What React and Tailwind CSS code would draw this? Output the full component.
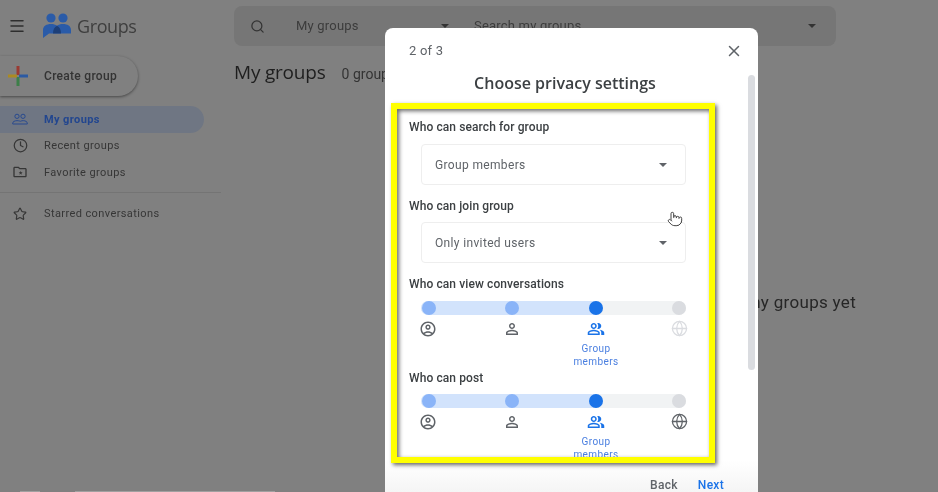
import React from 'react'
import { Menu, Search, X, Clock, Star, Globe, Pointer } from 'lucide-react'

const Caret = ({ className }) => (
  <span className={`w-0 h-0 border-x-[4px] border-x-transparent border-t-[4px] ${className}`} />
)

const AccountIcon = ({ className }) => (
  <svg viewBox="0 0 24 24" className={className} fill="currentColor">
    <path d="M12 2C6.48 2 2 6.48 2 12s4.48 10 10 10 10-4.48 10-10S17.52 2 12 2zM7.35 18.5C8.66 17.56 10.26 17 12 17s3.34.56 4.65 1.5C15.34 19.44 13.74 20 12 20s-3.34-.56-4.65-1.5zm10.79-1.38C16.45 15.8 14.32 15 12 15s-4.45.8-6.14 2.12C4.7 15.73 4 13.95 4 12c0-4.42 3.58-8 8-8s8 3.58 8 8c0 1.95-.7 3.73-1.86 5.12z" />
    <path d="M12 6c-1.93 0-3.5 1.57-3.5 3.5S10.07 13 12 13s3.5-1.57 3.5-3.5S13.93 6 12 6zm0 5c-.83 0-1.5-.67-1.5-1.5S11.17 8 12 8s1.5.67 1.5 1.5S12.83 11 12 11z" />
  </svg>
)

const PersonIcon = ({ className }) => (
  <svg viewBox="0 0 24 24" className={className} fill="currentColor">
    <path d="M12 5.9c1.16 0 2.1.94 2.1 2.1s-.94 2.1-2.1 2.1S9.9 9.16 9.9 8s.94-2.1 2.1-2.1m0 9c2.97 0 6.1 1.46 6.1 2.1v1.1H5.9V17c0-.64 3.13-2.1 6.1-2.1M12 4C9.79 4 8 5.79 8 8s1.79 4 4 4 4-1.79 4-4-1.79-4-4-4zm0 9c-2.67 0-8 1.34-8 4v3h16v-3c0-2.66-5.33-4-8-4z" />
  </svg>
)

const PeopleIcon = ({ className }) => (
  <svg viewBox="0 0 24 24" className={className} fill="currentColor">
    <path d="M16.67 13.13C18.04 14.06 19 15.32 19 17v3h4v-3c0-2.18-3.57-3.47-6.33-3.87z" />
    <path d="M15 12c2.21 0 4-1.79 4-4s-1.79-4-4-4c-.47 0-.91.1-1.33.24C14.5 5.27 15 6.58 15 8s-.5 2.73-1.33 3.76c.42.14.86.24 1.33.24z" />
    <path d="M9 12c2.21 0 4-1.79 4-4s-1.79-4-4-4-4 1.79-4 4 1.79 4 4 4zm0-6c1.1 0 2 .9 2 2s-.9 2-2 2-2-.9-2-2 .9-2 2-2z" />
    <path d="M9 13c-2.67 0-8 1.34-8 4v3h16v-3c0-2.66-5.33-4-8-4zm6 5H3v-.99C3.2 16.29 6.3 15 9 15s5.8 1.29 6 2v1z" />
  </svg>
)

const TwoPeopleIcon = ({ className }) => (
  <svg viewBox="0 0 24 24" className={className} fill="none" stroke="currentColor" strokeWidth="1.4">
    <circle cx="7.5" cy="8" r="3.2" />
    <circle cx="16.5" cy="8" r="3.2" />
    <path d="M1 18.5c0-2.500 3-4 6.500-4s5 1 5 1 1.500-1 4.500-1 6 1.500 6 4v1H1z" />
  </svg>
)

const FolderStarIcon = ({ className }) => (
  <svg viewBox="0 0 24 24" className={className} fill="currentColor">
    <path d="M20 6h-8l-2-2H4c-1.100 0-2 .9-2 2v12c0 1.100.9 2 2 2h16c1.100 0 2-.9 2-2V8c0-1.100-.9-2-2-2zm0 12H4V6h5.170l2 2H20v10z" />
    <path d="M13 10.500l.9 2h2.100l-1.700 1.400.6 2.100-1.900-1.200-1.900 1.200.6-2.100L10 12.500h2.100z" />
  </svg>
)

const GroupsLogo = () => (
  <svg viewBox="0 0 28 26" className="w-7 h-[26px]">
    <circle cx="8" cy="5" r="4.600" fill="#2a5ba8" />
    <circle cx="20" cy="5" r="4.600" fill="#2a5ba8" />
    <path d="M0 25V17c0-4 3.500-6 8-6 2.500 0 4.500.6 6 1.800 1.500-1.200 3.500-1.800 6-1.800 4.500 0 8 2 8 6v3.500H6z" fill="#2a5ba8" />
    <path d="M10 20.500c0-4 1.500-6.500 4-7.700 2.500 1.200 4 3.700 4 7.700z" fill="#1d3f78" />
  </svg>
)

const PlusLogo = () => (
  <svg viewBox="0 0 20 20" className="w-5 h-5">
    <rect x="8.500" y="0" width="3" height="9" fill="#9a3a32" />
    <rect x="8.500" y="11" width="3" height="9" fill="#3d7f49" />
    <rect x="0" y="8.500" width="9" height="3" fill="#ab8a21" />
    <rect x="11" y="8.500" width="9" height="3" fill="#2b5aa3" />
  </svg>
)

const navItems = [
  { label: 'My groups', icon: <TwoPeopleIcon className="w-4 h-4" />, active: true },
  { label: 'Recent groups', icon: <Clock className="w-[15px] h-[15px]" /> },
  { label: 'Favorite groups', icon: <FolderStarIcon className="w-4 h-4" /> },
]

const Select = ({ value }) => (
  <div className="ml-3 w-[265px] h-[41px] border border-[#eeeeee] rounded flex items-center justify-between pl-[13px] pr-[18px] text-xs tracking-[0.35px] text-[#5f6368]">
    {value}
    <Caret className="border-t-[#5f6368]" />
  </div>
)

const Label = ({ children }) => (
  <div className="h-4 leading-4 text-xs font-medium tracking-[0.1px] text-[#3c4043]">{children}</div>
)

const Slider = ({ globeFaded }) => (
  <div className="ml-3 w-[265px]">
    <div className="h-3.5 rounded-full bg-[#f1f3f4] relative">
      <div className="absolute left-0 top-0 h-3.5 w-[175px] rounded-l-full bg-[#d2e3fc]" />
      <div className="relative flex justify-between pl-px">
        <span className="w-3.5 h-3.5 rounded-full bg-[#8ab4f8]" />
        <span className="w-3.5 h-3.5 rounded-full bg-[#8ab4f8]" />
        <span className="w-3.5 h-3.5 rounded-full bg-[#1a73e8]" />
        <span className="w-3.5 h-3.5 rounded-full bg-[#dadce0]" />
      </div>
    </div>
    <div className="flex justify-between mt-[5px] -mx-0.5">
      <AccountIcon className="w-[18px] h-[18px] text-[#5f6368]" />
      <PersonIcon className="w-[18px] h-[18px] text-[#5f6368]" />
      <div className="relative">
        <PeopleIcon className="w-[18px] h-[18px] text-[#1a73e8]" />
        <div className="absolute top-[22px] left-1/2 -translate-x-1/2 w-12 text-center text-[10px] leading-[13px] tracking-[0.4px] text-[#4a7fe0]">
          Group members
        </div>
      </div>
      <Globe strokeWidth={1.8} className={`w-[17px] h-[17px] ${globeFaded ? 'text-[#dadce0]' : 'text-[#5f6368]'}`} />
    </div>
  </div>
)

const App = () => {
  return (
    <div className="relative w-[938px] h-[492px] overflow-hidden bg-[#808080] flex flex-col font-['Roboto',sans-serif] blur-[0.35px]">
      {/* top bar */}
      <div className="h-[50px] flex items-center pt-[2px] shrink-0">
        <Menu className="ml-[8px] w-[18px] h-[18px] text-[#2e2e2e]" />
        <div className="ml-[17px]"><GroupsLogo /></div>
        <span className="ml-[6px] w-[157px] text-[18px] font-['Open_Sans',sans-serif] tracking-[-0.4px] text-[#3e3e3e]">Groups</span>
        <div className="w-[602px] h-10 rounded-lg bg-[#767676] flex items-center">
          <Search className="ml-4 w-[15px] h-[15px] text-[#333333]" />
          <span className="ml-[31px] w-[145px] text-[13px] tracking-[0.2px] text-[#3c3c3c]">My groups</span>
          <Caret className="border-t-[#333333]" />
          <span className="ml-[25px] flex-1 text-[13px] tracking-[0.2px] text-[#3c3c3c]">Search my groups</span>
          <Caret className="mr-5 border-t-[#333333]" />
        </div>
      </div>

      <div className="flex flex-1 min-h-0">
        {/* sidebar */}
        <div className="w-[234px] shrink-0 pt-[6px]">
          <div className="w-[138px] h-10 rounded-r-full bg-[#808080] shadow-[0_1px_3px_rgba(0,0,0,0.45)] flex items-center pl-2">
            <PlusLogo />
            <span className="ml-4 text-xs font-medium tracking-[0.3px] text-[#333333]">Create group</span>
          </div>
          <div className="w-[221px] mt-[10px] pb-[6px] border-b border-[#747474]">
            {navItems.map((item) => (
              <div
                key={item.label}
                className={`w-[204px] h-[26.500px] flex items-center rounded-r-full ${item.active ? 'bg-[#6f7683] text-[#22468f] font-bold' : 'text-[#363636]'}`}
              >
                <span className="w-10 mr-1 flex justify-center">{item.icon}</span>
                <span className="text-[11px] tracking-[0.4px] pt-px">{item.label}</span>
              </div>
            ))}
          </div>
          <div className="h-10 pt-[2px] flex items-center text-[#363636]">
            <span className="w-10 mr-1 flex justify-center"><Star className="w-[14px] h-[14px]" /></span>
            <span className="text-[11px] tracking-[0.4px] pt-px">Starred conversations</span>
          </div>
        </div>

        {/* main column */}
        <div className="flex-1 pr-[82px]">
          <div className="flex items-baseline pt-[8px]">
            <span className="text-[19px] font-['Open_Sans',sans-serif] tracking-[-0.2px] text-[#1e1e1e]">My groups</span>
            <span className="ml-4 text-sm text-[#333333]">0 groups</span>
          </div>
          <div className="mt-[203px] text-right text-[17px] tracking-[0.3px] text-[#262626]">You don't have any groups yet</div>
        </div>
      </div>

      {/* faint strip on the bottom edge */}
      <div className="h-px flex shrink-0">
        <span className="ml-5 w-5 bg-[#a0a0a0]" />
        <span className="ml-[35px] w-[200px] bg-[#a0a0a0]" />
      </div>

      {/* dialog */}
      <div className="absolute left-[385px] top-[28px] w-[373px] h-[480px] rounded-lg bg-gradient-to-b from-white from-90% to-[#f0f0f0] flex flex-col">
        <div className="h-[46px] flex items-center justify-between pl-6 pr-[15px]">
          <span className="text-[13px] tracking-[0.2px] text-[#5f6368]">2 of 3</span>
          <X className="w-[18px] h-[18px] text-[#5f6368]" />
        </div>
        <div className="h-[19px] leading-[19px] text-center pr-[13px] text-[16px] font-semibold font-['Open_Sans',sans-serif] tracking-[0px] text-[#3c4043]">
          Choose privacy settings
        </div>
        <div className="flex mt-[10px] pl-[6px]">
          <div className="w-[324px] h-[360px] border-[6px] border-[#ffff00] overflow-hidden shadow-[2px_2px_4px_rgba(0,0,0,0.6),inset_2px_2px_4px_rgba(0,0,0,0.6)]">
            <div className="pl-3 pt-[10px] flex flex-col">
              <Label>Who can search for group</Label>
              <div className="mt-[9px]"><Select value="Group members" /></div>
              <div className="mt-[13px]"><Label>Who can join group</Label></div>
              <div className="mt-[8px]"><Select value="Only invited users" /></div>
              <div className="mt-[13px]"><Label>Who can view conversations</Label></div>
              <div className="mt-[9px] h-[68px]"><Slider globeFaded /></div>
              <div className="mt-[1px]"><Label>Who can post</Label></div>
              <div className="mt-[8px]"><Slider /></div>
            </div>
          </div>
          <div className="ml-[33px] -mt-[28px] w-[7px] h-[295px] rounded-full bg-[#dadce0]" />
        </div>
        <div className="mt-[14px] flex justify-end pr-[34px] gap-5 text-xs font-medium tracking-[0.3px]">
          <span className="text-[#5f6368]">Back</span>
          <span className="text-[#1a73e8]">Next</span>
        </div>
      </div>

      {/* hand cursor */}
      <Pointer className="absolute left-[667px] top-[211px] w-4 h-4 text-[#444444] fill-white" strokeWidth={1.5} />
    </div>
  )
}

export default App
